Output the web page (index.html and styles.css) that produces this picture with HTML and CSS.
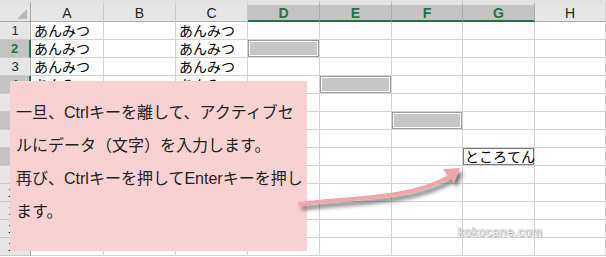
FILE: index.html
```html
<!DOCTYPE html>
<html lang="ja">
<head>
    <meta charset="UTF-8">
    <title>Ctrl+Enter</title>
    <link rel="stylesheet" href="styles.css">
</head>
<body>
    <!-- Worksheet grid, built by the script below -->
    <div class="sheet" id="sheet"></div>

    <!-- Explanation balloon -->
    <div class="note">
        一旦、Ctrlキーを離して、アクティブセ<br>
        ルにデータ（文字）を入力します。<br>
        再び、Ctrlキーを押してEnterキーを押し<br>
        ます。
    </div>

    <!-- Curved arrow pointing at the active cell -->
    <svg class="arrow" width="606" height="257" viewBox="0 0 606 257">
        <defs>
            <filter id="drop" x="-20%" y="-50%" width="140%" height="200%">
                <feDropShadow dx="3" dy="4" stdDeviation="2" flood-color="#333" flood-opacity="0.7"/>
            </filter>
        </defs>
        <g filter="url(#drop)">
            <path d="M300 204 C 350 197, 405 201, 449 177" fill="none" stroke="#f1a5aa" stroke-width="4" stroke-linecap="round"/>
            <polygon points="460,168 443,169 454,183" fill="#f1a5aa"/>
        </g>
    </svg>

    <div class="credit">kokocane.com</div>

    <script>
        const columns = ['A', 'B', 'C', 'D', 'E', 'F', 'G', 'H'];
        const rowCount = 13;
        const values = {
            A1: 'あんみつ', A2: 'あんみつ', A3: 'あんみつ', A4: 'あんみつ',
            C1: 'あんみつ', C2: 'あんみつ', C3: 'あんみつ', C4: 'あんみつ',
            G8: 'ところてん'
        };
        const picked = ['D2', 'E4', 'F6'];
        const active = 'G8';
        const pickedCols = ['D', 'E', 'F', 'G'];
        const pickedRows = [2, 4, 6, 8];

        const sheet = document.getElementById('sheet');

        function addCell(className, text) {
            const el = document.createElement('div');
            el.className = className;
            el.textContent = text || '';
            sheet.appendChild(el);
        }

        addCell('corner');
        columns.forEach(col => {
            addCell(pickedCols.includes(col) ? 'col-head on' : 'col-head', col);
        });

        for (let r = 1; r <= rowCount; r++) {
            addCell(pickedRows.includes(r) ? 'row-head on' : 'row-head', r);
            columns.forEach(col => {
                const ref = col + r;
                let cls = 'cell';
                if (picked.includes(ref)) cls += ' picked';
                if (ref === active) cls += ' active';
                addCell(cls, values[ref]);
            });
        }
    </script>
</body>
</html>
```

FILE: styles.css
```css
body {
    margin: 0;
    width: 606px;
    height: 257px;
    overflow: hidden;
    position: relative;
    background: #fff;
    font-family: "Liberation Sans", "Noto Sans CJK JP", sans-serif;
    color: #000;
}
.sheet {
    display: grid;
    grid-template-columns: 31px 73px 72px 72px 72px 72px 71px 72px 71px;
    grid-template-rows: 22px repeat(13, 18px);
}
.sheet > div {
    box-sizing: border-box;
}
.corner {
    position: relative;
    background: #e6e6e6;
    border-top: 5px solid #e3e3e3;
    border-right: 1px solid #ababab;
    border-bottom: 1px solid #ababab;
}
.corner::after {
    content: "";
    position: absolute;
    right: 3px;
    bottom: 2px;
    width: 10px;
    height: 10px;
    background: #b9b9b9;
    clip-path: polygon(100% 0, 100% 100%, 0 100%);
}
.col-head {
    display: flex;
    align-items: center;
    justify-content: center;
    font-size: 14px;
    color: #262626;
    background: #e6e6e6;
    border-top: 5px solid #e3e3e3;
    border-right: 1px solid #cbcbcb;
    border-bottom: 1px solid #ababab;
}
.col-head.on {
    background: #c3c3c3;
    color: #217346;
    font-weight: bold;
    border-right-color: #ababab;
    border-bottom: 2px solid #217346;
}
.row-head {
    display: flex;
    align-items: center;
    justify-content: center;
    font-size: 13px;
    color: #262626;
    background: #e6e6e6;
    border-right: 1px solid #ababab;
    border-bottom: 1px solid #cbcbcb;
}
.row-head.on {
    background: #c3c3c3;
    color: #217346;
    font-weight: bold;
    border-right: 2px solid #217346;
}
.cell {
    font-family: "Noto Sans CJK JP", sans-serif;
    font-size: 14px;
    line-height: 17px;
    padding: 0 3px;
    white-space: nowrap;
    border-right: 1px solid #d4d4d4;
    border-bottom: 1px solid #d4d4d4;
}
.cell.picked {
    background: #c6c6c6;
    box-shadow: inset 0 0 0 1px #9d9d9d, inset 0 0 0 2px #fff;
}
.cell.active {
    background: #fff;
    padding-left: 2px;
    box-shadow: inset 0 0 0 1px #7b7b7b;
}
.note {
    position: absolute;
    left: 10px;
    top: 81px;
    width: 297px;
    height: 170px;
    box-sizing: border-box;
    padding: 15px 0 0 6px;
    background: #f8d1d3;
    font-size: 16px;
    line-height: 33px;
    color: #222;
    white-space: nowrap;
}
.arrow {
    position: absolute;
    left: 0;
    top: 0;
    pointer-events: none;
}
.credit {
    position: absolute;
    left: 458px;
    top: 225px;
    font-size: 12px;
    letter-spacing: 0.6px;
    color: #fafafa;
    text-shadow: 0 0 1px #777, 1px 1px 1px #aaa;
}
```
